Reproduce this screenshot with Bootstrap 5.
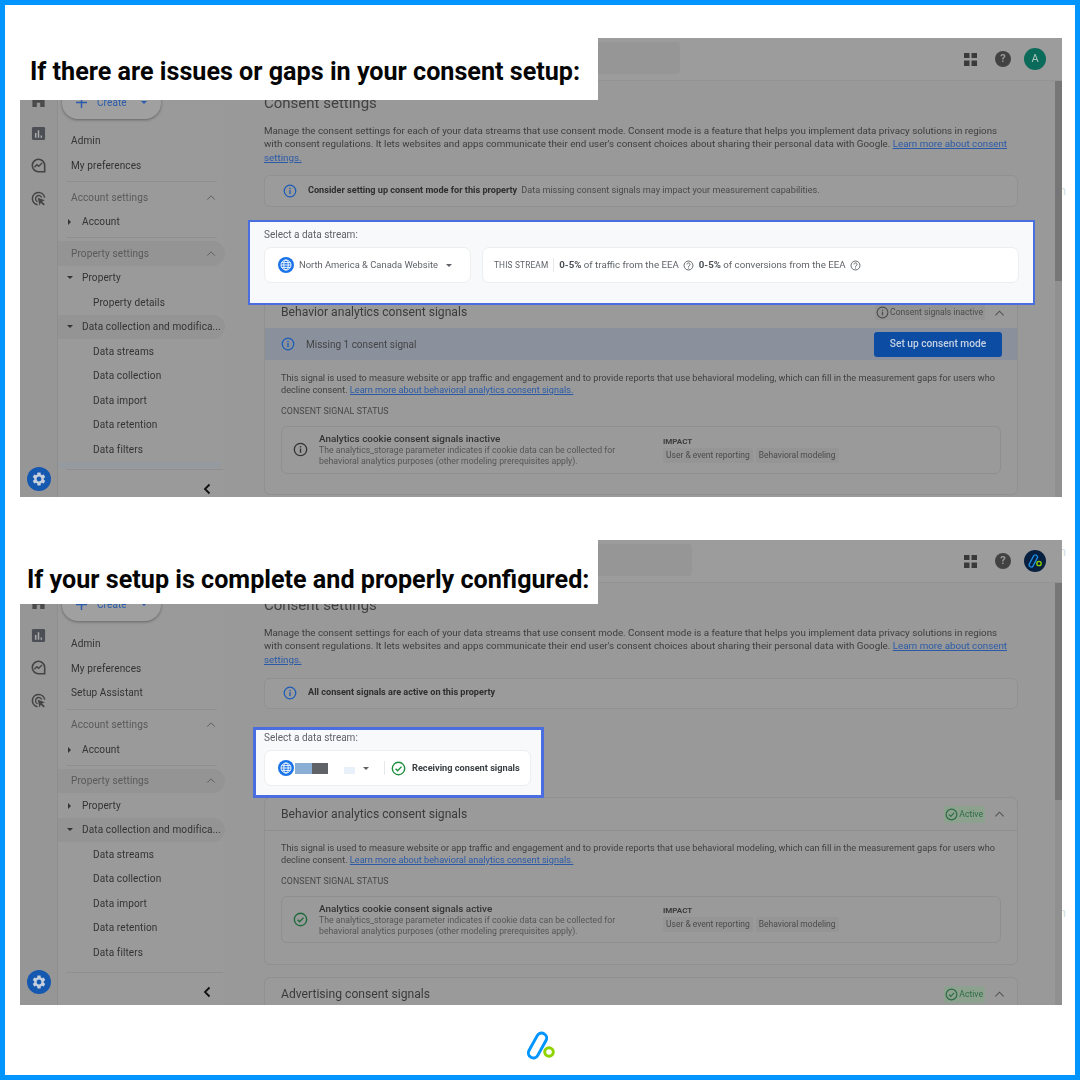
<!doctype html>
<html lang="en">
<head>
<meta charset="utf-8">
<title>Consent settings</title>
<link href="https://cdn.jsdelivr.net/npm/bootstrap@5.3.0/dist/css/bootstrap.min.css" rel="stylesheet">
<style>
html,body{margin:0;background:#fff;font-family:Roboto,"Liberation Sans",sans-serif}
.frame{width:1080px;height:1080px;border:5px solid #0095ff;background:#fff;padding:33px 13px 0 15px;overflow:hidden}
.shot{position:relative;width:1042px}
.shot-a{height:459px;--foot:28px;--gearpad:6px;--searchw:260px}
.shot-b{height:465px;margin-top:43px;--foot:33px;--gearpad:11px;--searchw:272px}
.stray{position:absolute;right:-4px;font-size:13px;line-height:13px;color:#d5dcdc;z-index:0}
.stray-1{top:146px}.stray-2{top:5px}.stray-3{top:366px}
.shot-in{position:relative;z-index:1;height:100%;background:#999;overflow:hidden;filter:blur(.35px);color:#3a3a3a}
.heading-box{position:absolute;z-index:3;left:0;top:0;width:578px;background:#fff;color:#050505;font-weight:700;font-size:25.15px;white-space:nowrap;display:flex;align-items:center}
.shot-a .heading-box{height:62px;padding:6px 0 0 10px}
.shot-b .heading-box{height:64px;padding:16px 0 0 7px}
.topbar{height:43px;flex:none;background:#9c9c9c;border-bottom:1px solid #939393;padding:4px 16px 0 400px}
.search{width:var(--searchw);height:32px;background:#969696;border-radius:4px}
.tools{height:34px}
.grid-ic{margin-right:18px}
.help-ic{width:16px;height:16px;background:#424242;color:#999;font-size:11px;margin-right:13px}
.ava{width:22px;height:22px;background:#0b6b5a;color:#a9c4bd;font-size:11px}
.body-row{min-height:0}
.rail{width:38px;flex:none;background:#969696;border-right:1px solid #8e8e8e;padding:12px 0 var(--gearpad)}
.rail svg{display:block}
.rail-ico{height:32.5px}
.gear{width:24px;height:24px;border-radius:50%;background:#1558b0}
.side{width:167px;flex:none;background:#9a9a9a;font-size:10.05px;letter-spacing:.01em}
.create{margin:5px 0 9.5px 4px;width:99px;height:33px;flex:none;border-radius:16px;background:#a0a0a0;box-shadow:0 1px 3px rgba(0,0,0,.35);color:#2a5cab;font-size:10px;padding-left:14px;gap:10px}
.shot-b .create{margin-bottom:10.5px}
.drop-blue{border-top-color:#2a5cab!important}
.sb-row{height:24.5px;flex:none;display:flex;align-items:center;white-space:nowrap;color:#333}
.sb-top{padding-left:13px}
.sb-caret{padding-left:9px}
.sb-caret i{width:7px;height:7px;margin-right:8px;flex:none;display:block;position:relative}
.down i::before{content:"";position:absolute;left:0;top:2px;border:3px solid transparent;border-top:3.5px solid #333;border-bottom:0}
.right i::before{content:"";position:absolute;left:1px;top:1px;border:3px solid transparent;border-left:3.5px solid #333;border-right:0}
.sb-sub{padding-left:35px}
.sb-title{padding:0 9px 0 13px;color:#595959;justify-content:space-between}
.pill{border-radius:0 13px 13px 0;background:#949494}
.rule-top{border-top:1px solid #8f8f8f;margin:3px 8px 0 8px;height:4px;flex:none}
.rule-g{margin-top:3.6px}
.tail{height:6px;flex:none;background:#959aa0;margin-right:4px;border-radius:0 0 6px 0}
.foot{height:var(--foot);flex:none;border-top:1px solid #8f8f8f;margin-left:8px;padding:11px 11px 0 0;text-align:right;margin-right:2px}
.main{flex:1;background:#999;padding:14px 44px 0 39px;min-width:0;position:relative}
.sbar{position:absolute;right:0;top:0;width:7px;background:#767676}
.shot-a .sbar{height:200px}
.shot-b .sbar{height:217px}
.gutter{position:absolute;right:0;top:0;bottom:0;width:7px;background:#909090}
.page-h{font-size:15px;line-height:18px;margin:0;font-weight:400;color:#414141;position:relative;top:-1px}
.para{font-size:9.79px;line-height:13.5px;margin:10.5px 0 0;color:#3d3d3d;max-width:750px}
.para a,.cp a{color:#2a5aa8;text-decoration:underline}
.notice{height:32px;margin-top:11px;border:1px solid #919191;border-radius:6px;background:#9b9b9b;padding-left:18px;font-size:9.15px;color:#4a4a4a}
.shot-b .notice{height:30.5px;margin-top:12px}
.notice b{font-weight:700;color:#2e2e2e;margin:0 4px 0 11px}
.ic-blue{color:#1a5bb8}
.ic-dark{color:#333}
.ic-green{color:#1e8e3e}
.ic-dgreen{color:#1c6b3c}
.hilite{position:relative;z-index:2;background:#f8f9fa;border:2px solid #4a6de0;color:#5f6368}
.hl-a{margin:13px -17px -9px -16px;height:85px;padding:6px 14px 0}
.hl-b{margin:18.5px 0 -1px -11px;width:291px;height:71px;padding:1px 8px 0;border-width:3px}
.hl-label{font-size:10px;line-height:13px;margin-bottom:6px;color:#5f6368}
.pick{height:36px;background:#fff;border:1px solid #eceef0;border-radius:7px;flex:none;font-size:9.4px;color:#5f6368}
.pick-stream{width:207px;padding-left:13px}
.pick-stream .drop{margin-left:8px}
.pick-stats{flex:1;margin-left:11px;padding-left:11px;color:#5f6368;font-size:9.7px}
.pick-b{width:267px;padding-left:13px}
.drop{width:0;height:0;border:3px solid transparent;border-top:3.5px solid #5f6368;border-bottom:0;flex:none}
.name-x{margin-left:5px;white-space:nowrap}
.stats-l{font-size:8.3px;letter-spacing:.02em;padding-right:5px;border-right:1px solid #e4e6e8;line-height:14px}
.stats-t b{font-weight:700;color:#4a4e52}
.stats-t{margin-left:5px;white-space:nowrap}
.blk{height:11px;display:block}
.blk1{width:17px;background:#8aaed4;margin-left:1px}
.blk2{width:16px;background:#5f6368}
.blk3{width:11px;height:7px;background:#e8f0fa;margin:4px 0 0 16px}
.vsep{width:1px;height:14px;background:#e6e8ea;margin:0 6px 0 15px}
.recv{font-size:9.2px;font-weight:700;color:#3c4043;margin-left:6px;white-space:nowrap}
.sig{border:1px solid #909090;border-radius:6px;background:#9a9a9a}
.sig-a{height:199px}
.sig-b{height:168px}
.sig-head{height:31px;padding:0 12px 0 16px;font-size:12.15px;color:#3b3b3b}
.sig-b .sig-head,.adv .sig-head{border-bottom:1px solid #8f8f8f;height:33px}
.adv{margin-top:12px;height:60px}
.chip{height:15px;padding:0 2px 0 1px;gap:1px;font-size:8.6px;border-radius:2px;white-space:nowrap;color:#4c4c4c;background:#949494}
.chip-ok{background:#8ca28f;color:#2f6b45;height:17px}
.up{margin-left:9px;color:#505050}
.banner{height:32px;background:#8a919d;padding:0 15px 0 16px;font-size:10px;color:#444}
.banner span{margin-left:11px}
.cta{width:128px;height:25px;background:#0c4da3;color:#c4d0e4;border-radius:3px;font-size:10.2px;font-weight:500;border:0;padding:0}
.sig-body{padding:11.5px 16px 0}
.sig-b .sig-body{padding-top:10.5px}
.cp{font-size:9.17px;line-height:12.4px;margin:0;color:#3f3f3f}
.cap{font-size:8.8px;line-height:12px;color:#474747;margin-top:9px;letter-spacing:.01em}
.st-card{height:48px;margin-top:8.5px;border:1px solid #8f8f8f;border-radius:6px;padding-left:11px}
.sig-b .st-card{height:47px}
.st-text{width:344px;margin-left:11px;margin-top:1px;padding-right:44px}
.st-t{font-size:9.9px;font-weight:500;line-height:12px;color:#333}
.st-d{font-size:8.7px;line-height:11.3px;color:#555}
.st-imp{font-size:8px;font-weight:700;color:#3c3c3c;line-height:10px;margin-bottom:1px}
.imp{height:15px;padding:0 3px;background:#959595;font-size:8.5px;color:#4b4b4b;white-space:nowrap;border-radius:2px}
.imp-row{gap:3px}
.logo-wrap{height:70px;padding-top:11px}
</style>
</head>
<body>
<svg width="0" height="0" class="position-absolute">
 <defs>
  <symbol id="i-info" viewBox="0 0 16 16"><circle cx="8" cy="8" r="6.6" fill="none" stroke="currentColor" stroke-width="1.4"/><rect x="7.25" y="7" width="1.5" height="4.5" fill="currentColor"/><rect x="7.25" y="4.4" width="1.5" height="1.5" fill="currentColor"/></symbol>
  <symbol id="i-ok" viewBox="0 0 16 16"><circle cx="8" cy="8" r="6.6" fill="none" stroke="currentColor" stroke-width="1.5"/><path d="M4.9 8.2l2.2 2.2 4.1-4.4" fill="none" stroke="currentColor" stroke-width="1.5"/></symbol>
  <symbol id="i-q" viewBox="0 0 16 16"><circle cx="8" cy="8" r="6.5" fill="none" stroke="currentColor" stroke-width="1.4"/><path d="M5.8 6.4a2.2 2.2 0 1 1 3.5 1.8c-.8.6-1.3 1-1.3 2" fill="none" stroke="currentColor" stroke-width="1.4"/><rect x="7.3" y="11" width="1.4" height="1.4" fill="currentColor"/></symbol>
  <symbol id="i-up" viewBox="0 0 12 8"><path d="M1.5 6.5L6 2l4.5 4.5" fill="none" stroke="currentColor" stroke-width="1.1"/></symbol>
  <symbol id="i-globe" viewBox="0 0 16 16"><circle cx="8" cy="8" r="8" fill="#1a73e8"/><g fill="none" stroke="#fff" stroke-width=".9"><circle cx="8" cy="8" r="5"/><ellipse cx="8" cy="8" rx="2.2" ry="5"/><path d="M3 8h10M3.7 5.6h8.6M3.7 10.4h8.6"/></g></symbol>
  <symbol id="i-home" viewBox="0 0 16 16"><path d="M8 1L1.5 6.5V15h4.7v-4.5h3.6V15h4.7V6.5z" fill="#4b4b4b"/></symbol>
  <symbol id="i-chart" viewBox="0 0 16 16"><rect x="1" y="1" width="14" height="14" rx="1.5" fill="#4b4f55"/><path d="M4.2 7.5h1.6v5H4.2zM7.2 4.5h1.6v8H7.2zM10.2 10h1.6v2.5h-1.6z" fill="#a8a8a8"/></symbol>
  <symbol id="i-ring" viewBox="0 0 16 16"><path d="M14.6 14.6H8a6.6 6.6 0 1 1 6.6-6.6z" fill="none" stroke="#444" stroke-width="1.7"/><path d="M3.6 9.8l2.7-2.6 2 1.6 3.6-3.6" fill="none" stroke="#444" stroke-width="1.5"/></symbol>
  <symbol id="i-cursor" viewBox="0 0 16 16"><path d="M7 14.6A6.6 6.6 0 1 1 14.6 7" fill="none" stroke="#444" stroke-width="1.6"/><path d="M7 11.4A3.4 3.4 0 1 1 11.4 7" fill="none" stroke="#444" stroke-width="1.4"/><path d="M7.2 7.2l7.6 2.6-3.1 1.3 3 3-1.3 1.3-3-3-1.3 3.2z" fill="#444"/></symbol>
  <symbol id="i-gear" viewBox="0 0 24 24"><path fill="#c6cfdc" d="M19.14 12.94c.04-.3.06-.61.06-.94 0-.32-.02-.64-.07-.94l2.03-1.58c.18-.14.23-.41.12-.61l-1.92-3.32c-.12-.22-.37-.29-.59-.22l-2.39.96c-.5-.38-1.03-.7-1.62-.94l-.36-2.54c-.04-.24-.24-.41-.48-.41h-3.84c-.24 0-.43.17-.47.41l-.36 2.54c-.59.24-1.13.57-1.62.94l-2.39-.96c-.22-.08-.47 0-.59.22L2.74 8.87c-.12.21-.08.47.12.61l2.03 1.58c-.05.3-.09.63-.09.94s.02.64.07.94l-2.03 1.58c-.18.14-.23.41-.12.61l1.92 3.32c.12.22.37.29.59.22l2.39-.96c.5.38 1.03.7 1.62.94l.36 2.54c.05.24.24.41.48.41h3.84c.24 0 .44-.17.47-.41l.36-2.54c.59-.24 1.13-.56 1.62-.94l2.39.96c.22.08.47 0 .59-.22l1.92-3.32c.12-.22.07-.47-.12-.61l-2.01-1.58zM12 15.6c-1.98 0-3.6-1.62-3.6-3.6s1.62-3.6 3.6-3.6 3.6 1.62 3.6 3.6-1.62 3.6-3.6 3.6z"/></symbol>
  <symbol id="i-grid" viewBox="0 0 13 13"><path fill="#3a3a3a" d="M0 0h5.5v5H0zM7.5 0H13v5H7.5zM0 7.5h5.5V13H0zM7.5 7.5H13V13H7.5z"/></symbol>
  <symbol id="i-left" viewBox="0 0 10 12"><path d="M7.5 1.5L3 6l4.5 4.5" fill="none" stroke="#111" stroke-width="1.8"/></symbol>
  <symbol id="i-plus" viewBox="0 0 12 12"><path d="M6 0v12M0 6h12" stroke="#2a5cab" stroke-width="1.6"/></symbol>
 </defs>
</svg>

<div class="frame">

 <section class="shot shot-a">
  <span class="stray stray-1">n</span>
  <h1 class="heading-box m-0">If there are issues or gaps in your consent setup:</h1>
  <div class="shot-in d-flex flex-column">
   <div class="topbar d-flex align-items-start">
    <div class="search"></div>
    <div class="tools ms-auto d-flex align-items-center">
     <svg width="13" height="13" class="grid-ic"><use href="#i-grid"/></svg>
     <span class="help-ic d-flex align-items-center justify-content-center rounded-circle fw-bold">?</span>
     <span class="ava d-flex align-items-center justify-content-center rounded-circle">A</span>
    </div>
   </div>
   <div class="body-row d-flex flex-grow-1">
    <div class="rail d-flex flex-column align-items-center">
     <div class="rail-ico"><svg width="15" height="15"><use href="#i-home"/></svg></div>
     <div class="rail-ico"><svg width="15" height="15"><use href="#i-chart"/></svg></div>
     <div class="rail-ico"><svg width="15" height="15"><use href="#i-ring"/></svg></div>
     <div class="rail-ico"><svg width="15" height="15"><use href="#i-cursor"/></svg></div>
     <div class="gear mt-auto d-flex align-items-center justify-content-center"><svg width="16" height="16"><use href="#i-gear"/></svg></div>
    </div>
    <nav class="side d-flex flex-column">
     <div class="d-flex flex-column flex-grow-1 overflow-hidden">
      <div class="create d-flex align-items-center"><svg width="11" height="11"><use href="#i-plus"/></svg>Create<span class="drop drop-blue ms-1"></span></div>
      <div class="sb-row sb-top">Admin</div>
      <div class="sb-row sb-top">My preferences</div>
      <div class="rule-top rule-g"></div>
      <div class="sb-row sb-title">Account settings<svg width="10" height="7"><use href="#i-up"/></svg></div>
      <div class="sb-row sb-caret right"><i></i>Account</div>
      <div class="rule-top"></div>
      <div class="sb-row sb-title pill">Property settings<svg width="10" height="7"><use href="#i-up"/></svg></div>
      <div class="sb-row sb-caret down"><i></i>Property</div>
      <div class="sb-row sb-sub">Property details</div>
      <div class="sb-row sb-caret down pill"><i></i>Data collection and modifica...</div>
      <div class="sb-row sb-sub">Data streams</div>
      <div class="sb-row sb-sub">Data collection</div>
      <div class="sb-row sb-sub">Data import</div>
      <div class="sb-row sb-sub">Data retention</div>
      <div class="sb-row sb-sub">Data filters</div>
      <div class="tail"></div>
     </div>
     <div class="foot"><svg width="10" height="12"><use href="#i-left"/></svg></div>
    </nav>
    <main class="main">
     <div class="gutter"></div><div class="sbar"></div>
     <h2 class="page-h">Consent settings</h2>
     <p class="para">Manage the consent settings for each of your data streams that use consent mode. Consent mode is a feature that helps you implement data privacy solutions in regions with consent regulations. It lets websites and apps communicate their end user's consent choices about sharing their personal data with Google. <a href="#">Learn more about consent settings.</a></p>
     <div class="notice d-flex align-items-center"><svg width="14" height="14" class="ic-blue"><use href="#i-info"/></svg><b>Consider setting up consent mode for this property</b>Data missing consent signals may impact your measurement capabilities.</div>
     <div class="hilite hl-a">
      <div class="hl-label">Select a data stream:</div>
      <div class="d-flex">
       <div class="pick pick-stream d-flex align-items-center"><svg width="16" height="16"><use href="#i-globe"/></svg><span class="name-x">North America &amp; Canada Website</span><span class="drop"></span></div>
       <div class="pick pick-stats d-flex align-items-center"><span class="stats-l">THIS STREAM</span><span class="stats-t"><b>0-5%</b> of traffic from the EEA</span><svg width="11" height="11" class="ms-1"><use href="#i-q"/></svg><span class="stats-t"><b>0-5%</b> of conversions from the EEA</span><svg width="11" height="11" class="ms-1"><use href="#i-q"/></svg></div>
      </div>
     </div>
     <div class="sig sig-a">
      <div class="sig-head d-flex align-items-center"><span>Behavior analytics consent signals</span><span class="chip d-inline-flex align-items-center ms-auto"><svg width="13" height="13"><use href="#i-info"/></svg>Consent signals inactive</span><svg width="11" height="8" class="up"><use href="#i-up"/></svg></div>
      <div class="banner d-flex align-items-center"><svg width="14" height="14" class="ic-blue"><use href="#i-info"/></svg><span>Missing 1 consent signal</span><button class="cta ms-auto" type="button">Set up consent mode</button></div>
      <div class="sig-body">
       <p class="cp">This signal is used to measure website or app traffic and engagement and to provide reports that use behavioral modeling, which can fill in the measurement gaps for users who decline consent. <a href="#">Learn more about behavioral analytics consent signals.</a></p>
       <div class="cap">CONSENT SIGNAL STATUS</div>
       <div class="st-card d-flex align-items-center">
        <svg width="15" height="15" class="flex-shrink-0 ic-dark"><use href="#i-info"/></svg>
        <div class="st-text"><div class="st-t">Analytics cookie consent signals inactive</div><div class="st-d">The analytics_storage parameter indicates if cookie data can be collected for behavioral analytics purposes (other modeling prerequisites apply).</div></div>
        <div><div class="st-imp">IMPACT</div><div class="imp-row d-flex"><span class="imp d-flex align-items-center">User &amp; event reporting</span><span class="imp d-flex align-items-center">Behavioral modeling</span></div></div>
       </div>
      </div>
     </div>
    </main>
   </div>
  </div>
 </section>

 <section class="shot shot-b">
  <span class="stray stray-2">n</span><span class="stray stray-3">n</span>
  <h1 class="heading-box m-0">If your setup is complete and properly configured:</h1>
  <div class="shot-in d-flex flex-column">
   <div class="topbar d-flex align-items-start">
    <div class="search"></div>
    <div class="tools ms-auto d-flex align-items-center">
     <svg width="13" height="13" class="grid-ic"><use href="#i-grid"/></svg>
     <span class="help-ic d-flex align-items-center justify-content-center rounded-circle fw-bold">?</span>
     <svg width="22" height="22" viewBox="0 0 22 22"><circle cx="11" cy="11" r="11" fill="#08203f"/><rect x="7.2" y="4.5" width="4.2" height="13" rx="2.1" transform="rotate(28 9.3 11)" fill="none" stroke="#1c8fe8" stroke-width="1.3"/><circle cx="15" cy="13.5" r="2.2" fill="none" stroke="#8fd400" stroke-width="1.3"/></svg>
    </div>
   </div>
   <div class="body-row d-flex flex-grow-1">
    <div class="rail d-flex flex-column align-items-center">
     <div class="rail-ico"><svg width="15" height="15"><use href="#i-home"/></svg></div>
     <div class="rail-ico"><svg width="15" height="15"><use href="#i-chart"/></svg></div>
     <div class="rail-ico"><svg width="15" height="15"><use href="#i-ring"/></svg></div>
     <div class="rail-ico"><svg width="15" height="15"><use href="#i-cursor"/></svg></div>
     <div class="gear mt-auto d-flex align-items-center justify-content-center"><svg width="16" height="16"><use href="#i-gear"/></svg></div>
    </div>
    <nav class="side d-flex flex-column">
     <div class="d-flex flex-column flex-grow-1 overflow-hidden">
      <div class="create d-flex align-items-center"><svg width="11" height="11"><use href="#i-plus"/></svg>Create<span class="drop drop-blue ms-1"></span></div>
      <div class="sb-row sb-top">Admin</div>
      <div class="sb-row sb-top">My preferences</div>
      <div class="sb-row sb-top">Setup Assistant</div>
      <div class="rule-top rule-g"></div>
      <div class="sb-row sb-title">Account settings<svg width="10" height="7"><use href="#i-up"/></svg></div>
      <div class="sb-row sb-caret right"><i></i>Account</div>
      <div class="rule-top"></div>
      <div class="sb-row sb-title pill">Property settings<svg width="10" height="7"><use href="#i-up"/></svg></div>
      <div class="sb-row sb-caret right"><i></i>Property</div>
      <div class="sb-row sb-caret down pill"><i></i>Data collection and modifica...</div>
      <div class="sb-row sb-sub">Data streams</div>
      <div class="sb-row sb-sub">Data collection</div>
      <div class="sb-row sb-sub">Data import</div>
      <div class="sb-row sb-sub">Data retention</div>
      <div class="sb-row sb-sub">Data filters</div>
     </div>
     <div class="foot"><svg width="10" height="12"><use href="#i-left"/></svg></div>
    </nav>
    <main class="main">
     <div class="gutter"></div><div class="sbar"></div>
     <h2 class="page-h">Consent settings</h2>
     <p class="para">Manage the consent settings for each of your data streams that use consent mode. Consent mode is a feature that helps you implement data privacy solutions in regions with consent regulations. It lets websites and apps communicate their end user's consent choices about sharing their personal data with Google. <a href="#">Learn more about consent settings.</a></p>
     <div class="notice d-flex align-items-center"><svg width="14" height="14" class="ic-blue"><use href="#i-info"/></svg><b>All consent signals are active on this property</b></div>
     <div class="hilite hl-b">
      <div class="hl-label">Select a data stream:</div>
      <div class="pick pick-b d-flex align-items-center">
       <svg width="16" height="16"><use href="#i-globe"/></svg><span class="blk blk1"></span><span class="blk blk2"></span><span class="blk blk3"></span><span class="drop ms-2"></span><span class="vsep"></span><svg width="15" height="15" class="ic-green"><use href="#i-ok"/></svg><span class="recv">Receiving consent signals</span>
      </div>
     </div>
     <div class="sig sig-b">
      <div class="sig-head d-flex align-items-center"><span>Behavior analytics consent signals</span><span class="chip chip-ok d-inline-flex align-items-center ms-auto"><svg width="13" height="13"><use href="#i-ok"/></svg>Active</span><svg width="11" height="8" class="up"><use href="#i-up"/></svg></div>
      <div class="sig-body">
       <p class="cp">This signal is used to measure website or app traffic and engagement and to provide reports that use behavioral modeling, which can fill in the measurement gaps for users who decline consent. <a href="#">Learn more about behavioral analytics consent signals.</a></p>
       <div class="cap">CONSENT SIGNAL STATUS</div>
       <div class="st-card d-flex align-items-center">
        <svg width="15" height="15" class="flex-shrink-0 ic-dgreen"><use href="#i-ok"/></svg>
        <div class="st-text"><div class="st-t">Analytics cookie consent signals active</div><div class="st-d">The analytics_storage parameter indicates if cookie data can be collected for behavioral analytics purposes (other modeling prerequisites apply).</div></div>
        <div><div class="st-imp">IMPACT</div><div class="imp-row d-flex"><span class="imp d-flex align-items-center">User &amp; event reporting</span><span class="imp d-flex align-items-center">Behavioral modeling</span></div></div>
       </div>
      </div>
     </div>
     <div class="sig adv">
      <div class="sig-head d-flex align-items-center"><span>Advertising consent signals</span><span class="chip chip-ok d-inline-flex align-items-center ms-auto"><svg width="13" height="13"><use href="#i-ok"/></svg>Active</span><svg width="11" height="8" class="up"><use href="#i-up"/></svg></div>
     </div>
    </main>
   </div>
  </div>
 </section>

 <div class="logo-wrap d-flex align-items-center justify-content-center">
  <svg width="40" height="34" viewBox="0 0 40 34"><rect x="11.5" y="3" width="10" height="27" rx="5" transform="rotate(29 16.5 16.5)" fill="none" stroke="#0095ff" stroke-width="3"/><circle cx="28" cy="23" r="4.3" fill="none" stroke="#8fd400" stroke-width="3"/></svg>
 </div>
</div>
</body>
</html>
